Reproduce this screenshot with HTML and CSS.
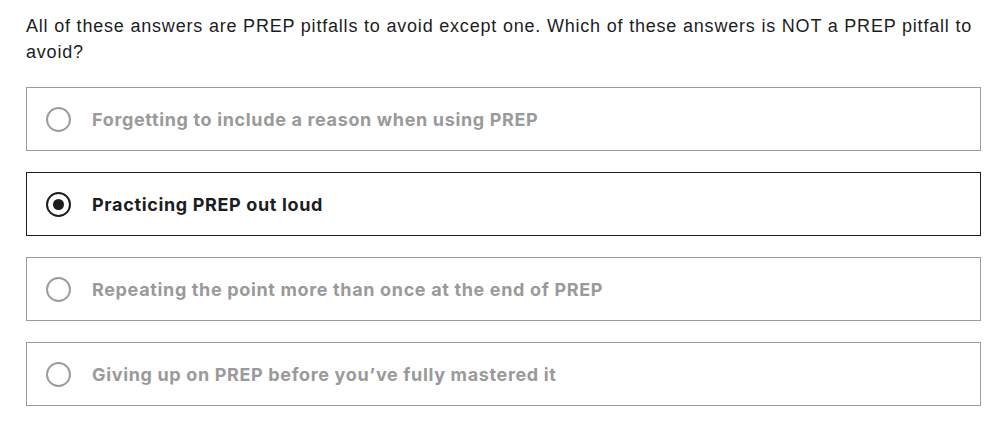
FILE: index.html
```html
<!DOCTYPE html>
<html lang="en">
<head>
<meta charset="utf-8">
<title>Quiz question</title>
<link rel="stylesheet" href="styles.css">
</head>
<body>
<main class="quiz">
  <p class="question">All of these answers are PREP pitfalls to avoid except one. Which of these answers is NOT a PREP pitfall to avoid?</p>
  <ul class="answers">
    <li class="answer">
      <span class="radio"></span>
      <span class="label">Forgetting to include a reason when using PREP</span>
    </li>
    <li class="answer selected">
      <span class="radio"></span>
      <span class="label">Practicing PREP out loud</span>
    </li>
    <li class="answer">
      <span class="radio"></span>
      <span class="label">Repeating the point more than once at the end of PREP</span>
    </li>
    <li class="answer">
      <span class="radio"></span>
      <span class="label">Giving up on PREP before you’ve fully mastered it</span>
    </li>
  </ul>
</main>
</body>
</html>
```

FILE: styles.css
```css
* { box-sizing: border-box; }
html, body { margin: 0; padding: 0; background: #fff; }
body { font-family: "Liberation Sans", Arial, sans-serif; color: #1c1d1f; }

.quiz {
  padding: 13px 26px 0 26px;
}

.question {
  margin: 0 0 22px 0;
  font-size: 18px;
  letter-spacing: 0.8px;
  line-height: 26px;
  color: #1c1d1f;
}

.answers {
  list-style: none;
  margin: 0;
  padding: 0;
  display: flex;
  flex-direction: column;
  gap: 21px;
}

.answer {
  display: flex;
  align-items: center;
  height: 64px;
  padding: 0 19px;
  border: 1px solid #9c9c9c;
  gap: 21px;
}

.answer.selected { border-color: #1c1d1f; }

.radio {
  flex: none;
  width: 25px;
  height: 25px;
  border-radius: 50%;
  border: 2px solid #9c9c9c;
  display: flex;
  align-items: center;
  justify-content: center;
}

.selected .radio { border-color: #1c1d1f; }
.selected .radio::after {
  content: "";
  width: 11px;
  height: 11px;
  border-radius: 50%;
  background: #1c1d1f;
}

.label {
  font-family: Inter, "Liberation Sans", sans-serif;
  font-weight: 700;
  font-size: 18px;
  letter-spacing: 0.65px;
  color: #9a9a9a;
}

.selected .label { color: #1c1d1f; }
```
